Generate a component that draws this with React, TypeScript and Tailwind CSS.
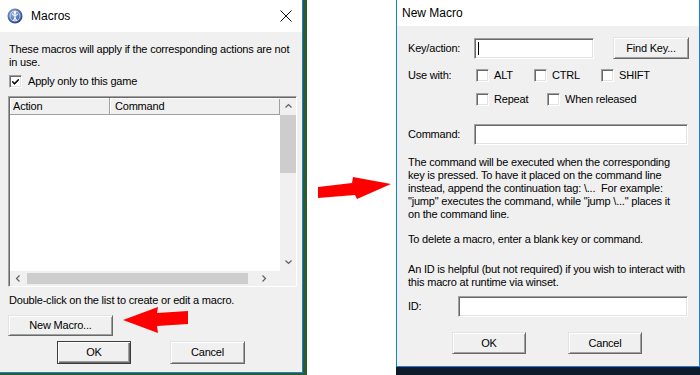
import type { ReactNode } from "react";

const ui = "font-['Liberation_Sans',Arial,sans-serif] text-[11px] leading-[13px] tracking-[-0.2px] text-black";

function Check({ checked = false }: { checked?: boolean }) {
  return (
    <span className="relative inline-block h-[13px] w-[13px] shrink-0 border border-t-[#a0a0a0] border-l-[#a0a0a0] border-r-white border-b-white bg-white shadow-[inset_1px_1px_0_#696969,inset_-1px_-1px_0_#e3e3e3]">
      {checked && (
        <svg viewBox="0 0 11 11" className="absolute inset-0 h-[11px] w-[11px]">
          <path d="M2.5 5 L4.5 7 L8.5 3 L8.5 4.5 L4.5 8.5 L2.5 6.5 Z" fill="#000" stroke="#000" strokeWidth="0.6" />
        </svg>
      )}
    </span>
  );
}

function CheckLabel({ label, checked, className = "" }: { label: string; checked?: boolean; className?: string }) {
  return (
    <span className={`flex items-center gap-[5px] ${className}`}>
      <Check checked={checked} />
      <span>{label}</span>
    </span>
  );
}

function Btn({ children, className = "", isDefault = false }: { children: ReactNode; className?: string; isDefault?: boolean }) {
  return (
    <div
      className={`flex items-center justify-center bg-[#f0f0f0] ${
        isDefault
          ? "border border-[#3c3c3c] shadow-[inset_1px_1px_0_#fff,inset_-1px_-1px_0_#696969,inset_-2px_-2px_0_#a0a0a0]"
          : "border border-t-[#e3e3e3] border-l-[#e3e3e3] border-r-[#696969] border-b-[#696969] shadow-[inset_1px_1px_0_#fff,inset_-1px_-1px_0_#a0a0a0]"
      } ${className}`}
    >
      {children}
    </div>
  );
}

function Field({ className = "", cursor = false }: { className?: string; cursor?: boolean }) {
  return (
    <div className={`flex items-center border border-t-[#a0a0a0] border-l-[#a0a0a0] border-r-white border-b-white bg-white shadow-[inset_1px_1px_0_#696969,inset_-1px_-1px_0_#e3e3e3] ${className}`}>
      {cursor && <span className="ml-[3px] h-[13px] w-px bg-black" />}
    </div>
  );
}

function Chevron({ dir }: { dir: "up" | "down" | "left" | "right" }) {
  const d = {
    up: "M1.5 5.5 L4.5 2.5 L7.5 5.5",
    down: "M1.5 2.5 L4.5 5.5 L7.5 2.5",
    left: "M5.5 1.5 L2.5 4.5 L5.5 7.5",
    right: "M2.5 1.5 L5.5 4.5 L2.5 7.5",
  }[dir];
  return (
    <svg viewBox="0 0 9 9" className="h-[9px] w-[9px]">
      <path d={d} fill="none" stroke="#606060" strokeWidth="1.2" />
    </svg>
  );
}

function AppIcon() {
  return (
    <svg viewBox="0 0 16 16" className="h-[16px] w-[16px]">
      <defs>
        <radialGradient id="g" cx="40%" cy="35%" r="70%">
          <stop offset="0%" stopColor="#9fb8e0" />
          <stop offset="100%" stopColor="#1d3f86" />
        </radialGradient>
      </defs>
      <circle cx="8" cy="8" r="7.5" fill="url(#g)" />
      <circle cx="8" cy="8" r="5" fill="none" stroke="#dfe8f7" strokeWidth="0.8" />
      <path d="M8 3 V13 M5 6 L8 8 L11 6 M6 13 L8 9.5 L10 13" stroke="#fff" strokeWidth="1" fill="none" />
      <circle cx="8" cy="4.5" r="1.2" fill="#fff" />
    </svg>
  );
}

function MacrosDialog() {
  return (
    <div className="flex h-[375px] w-[307px] shrink-0 flex-col bg-[#2f5a2a]">
      <div className={`flex h-[373px] w-[303px] flex-col border-r border-b border-[#1a7fd4] bg-[#f0f0f0] ${ui}`}>
        <div className="flex h-[32px] shrink-0 items-center bg-white pl-[7px] pr-[10px]">
          <AppIcon />
          <span className="ml-[8px] text-[12px] leading-[16px] tracking-normal">Macros</span>
          <svg viewBox="0 0 12 12" className="ml-auto h-[12px] w-[12px]">
            <path d="M0.5 0.5 L11.5 11.5 M11.5 0.5 L0.5 11.5" stroke="#111" strokeWidth="1" />
          </svg>
        </div>

        <div className="flex flex-col pl-[8px] pt-[11px]">
          <p className="h-[26px] whitespace-nowrap pl-px">
            These macros will apply if the corresponding actions are not
            <br />
            in use.
          </p>
          <CheckLabel label="Apply only to this game" checked className="mt-[6px] ml-px h-[13px] gap-[6px]" />

          {/* list box */}
          <div className="mt-[8px] flex h-[191px] w-[289px] flex-col border border-t-[#a0a0a0] border-l-[#a0a0a0] border-r-white border-b-white bg-white shadow-[inset_1px_1px_0_#696969]">
            <div className="ml-px mt-px flex h-[174px]">
              <div className="flex flex-1 flex-col">
                <div className="flex h-[17px]">
                  <div className="flex w-[100px] items-center border-r border-b border-r-[#a0a0a0] border-b-[#a0a0a0] bg-[#f0f0f0] pl-[3px] shadow-[inset_1px_1px_0_#fff]">
                    Action
                  </div>
                  <div className="flex flex-1 items-center border-b border-b-[#a0a0a0] bg-[#f0f0f0] pl-[5px] shadow-[inset_1px_1px_0_#fff,inset_-1px_0_0_#a0a0a0]">
                    Command
                  </div>
                </div>
                <div className="flex-1 bg-white" />
              </div>
              <div className="flex w-[16px] flex-col bg-[#f0f0f0]">
                <div className="flex h-[17px] items-center justify-center">
                  <Chevron dir="up" />
                </div>
                <div className="h-[58px] bg-[#cdcdcd]" />
                <div className="flex-1" />
                <div className="flex h-[17px] items-center justify-center">
                  <Chevron dir="down" />
                </div>
              </div>
            </div>
            <div className="ml-px flex h-[15px]">
              <div className="flex flex-1 items-center bg-[#f0f0f0]">
                <div className="flex w-[17px] justify-center">
                  <Chevron dir="left" />
                </div>
                <div className="h-[11px] w-[221px] bg-[#cdcdcd]" />
                <div className="flex flex-1 justify-center">
                  <Chevron dir="right" />
                </div>
              </div>
              <div className="w-[16px] bg-[#f0f0f0]" />
            </div>
          </div>

          <p className="mt-[7px] whitespace-nowrap pl-px">Double-click on the list to create or edit a macro.</p>
          <Btn className="mt-[8px] h-[21px] w-[105px]">New Macro...</Btn>
          <div className="mt-[5px] flex gap-[39px] pl-[49px]">
            <Btn isDefault className="h-[23px] w-[74px]">OK</Btn>
            <Btn className="h-[23px] w-[75px]">Cancel</Btn>
          </div>
        </div>
      </div>
    </div>
  );
}

function NewMacroDialog() {
  return (
    <div className="flex h-[375px] w-[304px] shrink-0 flex-col bg-[#0d1b2b]">
      <div className={`flex h-[367px] flex-col border-l border-r border-b border-[#1a7fd4] bg-[#f0f0f0] ${ui}`}>
        <div className="flex h-[26px] shrink-0 items-center bg-white pl-[5px]">
          <span className="text-[12px] leading-[16px] tracking-normal">New Macro</span>
        </div>

        <div className="flex flex-col pl-[11px]">
          <div className="mt-[11px] flex h-[22px] items-center">
            <span className="w-[66px]">Key/action:</span>
            <Field cursor className="h-[21px] w-[120px]" />
            <Btn className="ml-[19px] h-[22px] w-[76px]">Find Key...</Btn>
          </div>

          <div className="mt-[10px] flex h-[13px] items-center">
            <span className="w-[68px]">Use with:</span>
            <CheckLabel label="ALT" className="w-[58px]" />
            <CheckLabel label="CTRL" className="w-[67px]" />
            <CheckLabel label="SHIFT" />
          </div>

          <div className="mt-[11px] flex h-[13px] items-center pl-[68px]">
            <CheckLabel label="Repeat" className="w-[71px]" />
            <CheckLabel label="When released" />
          </div>

          <div className="mt-[18px] flex h-[21px] items-center">
            <span className="w-[66px]">Command:</span>
            <Field className="h-[21px] w-[214px]" />
          </div>

          <p className="mt-[11px] whitespace-nowrap">
            The command will be executed when the corresponding
            <br />
            key is pressed. To have it placed on the command line
            <br />
            instead, append the continuation tag: \...&nbsp; For example:
            <br />
            "jump" executes the command, while "jump \..." places it
            <br />
            on the command line.
          </p>

          <p className="mt-[12px] whitespace-nowrap">To delete a macro, enter a blank key or command.</p>

          <p className="mt-[17px] whitespace-nowrap">
            An ID is helpful (but not required) if you wish to interact with
            <br />
            this macro at runtime via winset.
          </p>

          <div className="mt-[7px] flex h-[21px] items-center">
            <span className="w-[50px]">ID:</span>
            <Field className="h-[21px] w-[230px]" />
          </div>

          <div className="mt-[15px] flex gap-[42px] pl-[44px]">
            <Btn className="h-[22px] w-[74px]">OK</Btn>
            <Btn className="h-[22px] w-[74px]">Cancel</Btn>
          </div>
        </div>
      </div>
    </div>
  );
}

export default function App() {
  return (
    <div className="relative flex h-[375px] w-[700px] overflow-hidden bg-white">
      <MacrosDialog />
      <div className="flex-1" />
      <NewMacroDialog />

      {/* red annotation arrows */}
      <svg className="pointer-events-none absolute left-0 top-0 h-[375px] w-[700px]" viewBox="0 0 700 375">
        <polygon points="123,320 158,307 157,313 188,311 188,324 157,326 158,333" fill="#ff0000" />
        <polygon points="318,187 352,183 353,177 391,184 357,199 355,195 318,198" fill="#ff0000" />
      </svg>
    </div>
  );
}
